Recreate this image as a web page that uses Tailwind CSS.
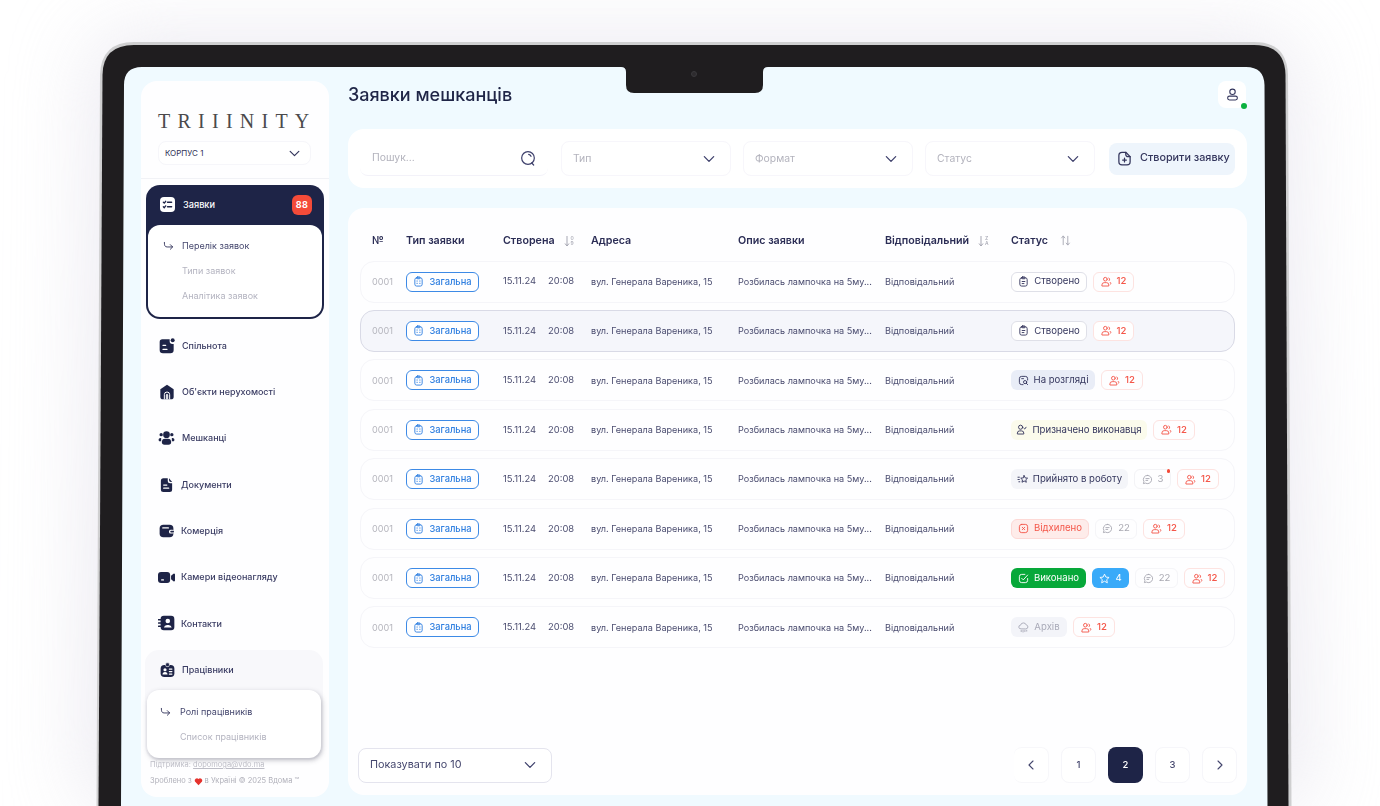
<!DOCTYPE html>
<html lang="uk">
<head>
<meta charset="utf-8">
<title>Заявки мешканців</title>
<script src="https://cdn.jsdelivr.net/npm/@tailwindcss/browser@4"></script>
</head>
<body class="bg-white">
<svg class="hidden" xmlns="http://www.w3.org/2000/svg">
  <symbol id="i-clip" viewBox="0 0 24 24"><g fill="none" stroke="currentColor" stroke-width="2" stroke-linecap="round" stroke-linejoin="round"><rect x="4" y="4" width="16" height="18" rx="4"/><rect x="8.5" y="2" width="7" height="4" rx="1.5"/><path d="M8.5 11h1M14.5 11h1M8.5 16h1M14.5 16h1"/></g></symbol>
  <symbol id="i-created" viewBox="0 0 24 24"><g fill="none" stroke="currentColor" stroke-width="2" stroke-linecap="round" stroke-linejoin="round"><rect x="4" y="4" width="16" height="18" rx="4"/><rect x="8.5" y="2" width="7" height="4" rx="1.5"/><path d="M9 12h6M9 16.500h4"/></g></symbol>
  <symbol id="i-users" viewBox="0 0 24 24"><g fill="none" stroke="currentColor" stroke-width="2" stroke-linecap="round" stroke-linejoin="round"><circle cx="9.500" cy="7" r="4"/><path d="M2 21v-1.500a5 5 0 0 1 5-5h5a5 5 0 0 1 5 5V21zM17 4a4 4 0 0 1 1 6M20 14l2 2-2 2"/></g></symbol>
  <symbol id="i-review" viewBox="0 0 24 24"><g fill="none" stroke="currentColor" stroke-width="2" stroke-linecap="round" stroke-linejoin="round"><path d="M11 21H8a5 5 0 0 1-5-5V8a5 5 0 0 1 5-5h8a5 5 0 0 1 5 5v3"/><circle cx="15.500" cy="15.500" r="3.500"/><path d="M18 18l3 3M8 8h4"/></g></symbol>
  <symbol id="i-assign" viewBox="0 0 24 24"><g fill="none" stroke="currentColor" stroke-width="2" stroke-linecap="round" stroke-linejoin="round"><circle cx="10" cy="7" r="4.500"/><path d="M3 21v-1a5 5 0 0 1 5-5h4a5 5 0 0 1 5 5v1zM17 9l2 2 3-4"/></g></symbol>
  <symbol id="i-accept" viewBox="0 0 24 24"><g fill="none" stroke="currentColor" stroke-width="2" stroke-linecap="round" stroke-linejoin="round"><path d="M14.500 3.500l2.300 5 5.200.6-3.900 3.600 1.100 5.300-4.700-2.700-4.700 2.700 1.100-5.300L7 9.100l5.200-.6z"/><path d="M1 7h3M1 12h3M3 17h2"/></g></symbol>
  <symbol id="i-reject" viewBox="0 0 24 24"><g fill="none" stroke="currentColor" stroke-width="2" stroke-linecap="round"><rect x="3" y="3" width="18" height="18" rx="5"/><path d="M9.500 9.500l5 5M14.500 9.500l-5 5"/></g></symbol>
  <symbol id="i-done" viewBox="0 0 24 24"><g fill="none" stroke="currentColor" stroke-width="2" stroke-linecap="round" stroke-linejoin="round"><path d="M21 12v4a5 5 0 0 1-5 5H8a5 5 0 0 1-5-5V8a5 5 0 0 1 5-5h7"/><path d="M8 11.500l3.500 3.500L21 4.500"/></g></symbol>
  <symbol id="i-star" viewBox="0 0 24 24"><path d="M12 2.500l3 6.400 7 .8-5.200 4.800 1.400 6.900-6.200-3.500-6.200 3.500 1.400-6.900L2 9.700l7-.8z" fill="none" stroke="currentColor" stroke-width="2" stroke-linejoin="round"/></symbol>
  <symbol id="i-chat" viewBox="0 0 24 24"><g fill="none" stroke="currentColor" stroke-width="2" stroke-linecap="round" stroke-linejoin="round"><path d="M12 3a9 9 0 1 1-4.500 16.800L3 21l1.200-4.500A9 9 0 0 1 12 3z"/><path d="M8.500 10h7M8.500 14h4"/></g></symbol>
  <symbol id="i-archive" viewBox="0 0 24 24"><g fill="none" stroke="currentColor" stroke-width="2" stroke-linecap="round" stroke-linejoin="round"><path d="M6 15a4 4 0 0 1-.5-8A6.500 6.500 0 0 1 18 6.500 4.300 4.300 0 0 1 18 15z"/><path d="M7 18v3M11 18v4M15 18v3M19 18v2"/></g></symbol>
  <symbol id="i-down" viewBox="0 0 24 24"><path d="M4 8l8 8 8-8" fill="none" stroke="currentColor" stroke-width="2.200" stroke-linecap="round" stroke-linejoin="round"/></symbol>
  <symbol id="i-branch" viewBox="0 0 24 24"><path d="M3 3c0 7 1 10 6 10h12M16 8l5 5-5 5" fill="none" stroke="currentColor" stroke-width="2" stroke-linecap="round" stroke-linejoin="round"/></symbol>
  <symbol id="n-community" viewBox="0 0 24 24"><path d="M5 2h11v3a4 4 0 0 0 4 4h2v9a5 5 0 0 1-5 5H6a5 5 0 0 1-5-5V6a4 4 0 0 1 4-4z" fill="currentColor"/><circle cx="20.500" cy="3.500" r="3" fill="currentColor"/><path d="M6 11h4M6 17h6" stroke="#fff" stroke-width="2" stroke-linecap="round"/></symbol>
  <symbol id="n-home" viewBox="0 0 24 24"><path d="M12 1l10 7v11a4 4 0 0 1-4 4H6a4 4 0 0 1-4-4V8z" fill="currentColor"/><path d="M8 23v-7a4 4 0 0 1 8 0v7M11 23v-6.500a1 1 0 0 1 2 0V23" fill="none" stroke="#fff" stroke-width="1.500"/></symbol>
  <symbol id="n-people" viewBox="0 0 24 24"><g fill="currentColor"><circle cx="12" cy="7" r="5"/><path d="M5 18a5 5 0 0 1 5-5h4a5 5 0 0 1 5 5 4 4 0 0 1-4 4H9a4 4 0 0 1-4-4z"/><circle cx="4" cy="7" r="2.500"/><circle cx="20" cy="7" r="2.500"/><path d="M0 15a3 3 0 0 1 3-3h1v5H1zM24 15a3 3 0 0 0-3-3h-1v5h3z"/></g></symbol>
  <symbol id="n-doc" viewBox="0 0 24 24"><path d="M7 1h7v4a4 4 0 0 0 4 4h3v10a4 4 0 0 1-4 4H7a4 4 0 0 1-4-4V5a4 4 0 0 1 4-4z" fill="currentColor"/><path d="M16 1l5 6h-2a3 3 0 0 1-3-3z" fill="currentColor"/><path d="M7.500 12h5M7.500 17h8" stroke="#fff" stroke-width="2" stroke-linecap="round"/></symbol>
  <symbol id="n-wallet" viewBox="0 0 24 24"><rect x="1" y="2" width="22" height="20" rx="6" fill="currentColor"/><path d="M6 7h9" stroke="#fff" stroke-width="2" stroke-linecap="round"/><rect x="16" y="10" width="8" height="6" rx="2.500" fill="#fff"/><rect x="18" y="11.700" width="6" height="2.600" rx="1.300" fill="currentColor"/></symbol>
  <symbol id="n-cam" viewBox="0 0 28 24"><rect x="0" y="3" width="20" height="18" rx="5" fill="currentColor"/><path d="M21.500 9l4-3a1.500 1.500 0 0 1 2.500 1.200v9.600a1.500 1.500 0 0 1-2.500 1.200l-4-3z" fill="currentColor"/><path d="M6 16h3" stroke="#fff" stroke-width="2" stroke-linecap="round"/></symbol>
  <symbol id="n-contact" viewBox="0 0 26 24"><rect x="4" y="1" width="21" height="22" rx="5" fill="currentColor"/><path d="M1 7h6M1 12h6M1 17h6" stroke="currentColor" stroke-width="2.600" stroke-linecap="round"/><circle cx="15" cy="9" r="3.500" fill="#fff"/><path d="M9 19a5 5 0 0 1 5-4h2a5 5 0 0 1 5 4z" fill="#fff"/></symbol>
  <symbol id="n-staff" viewBox="0 0 24 24"><rect x="1" y="4" width="22" height="19" rx="6" fill="currentColor"/><rect x="9" y="0.500" width="6" height="6" rx="2" fill="currentColor" stroke="#fff" stroke-width="1"/><circle cx="8" cy="11.500" r="2.500" fill="#fff"/><path d="M4 19a4 4 0 0 1 8 0z" fill="#fff"/><path d="M15 10.500h4M15 14.500h4M15 18.500h4" stroke="#fff" stroke-width="2" stroke-linecap="round"/></symbol>
</svg>

<div class="relative w-[1380px] h-[806px] overflow-hidden bg-white font-['Inter','Noto_Sans',sans-serif]">
  <svg class="absolute inset-0" width="1380" height="806" viewBox="0 0 1380 806" xmlns="http://www.w3.org/2000/svg">
    <path class="blur-2xl" d="M85 806L92 60 Q92 36 130 36L1258 36Q1296 36 1296 60L1305 806Z" fill="#dcd9e6" opacity="0.55"/>
    <path d="M96.500 806L100 75Q101 42 134 42L1254 42Q1287 42 1288 75L1291.500 806Z" fill="#cfcfd0"/>
    <path d="M98.500 806L102.500 75Q103 45 134 45L1254 45Q1285 45 1285.500 75L1288.500 806Z" fill="#1f1d1f"/>
    <path d="M121 806L124 85Q124 67 142 67L1246 67Q1264 67 1264.500 85L1267.500 806Z" fill="#f0faff"/>
    <path d="M621 67Q626 67 626 72L626 85Q626 93 634 93L755 93Q763 93 763 85L763 72Q763 67 768 67Z" fill="#1f1d1f"/>
    <circle cx="694" cy="74" r="2.500" fill="#2d2b2e" stroke="#3a393c"/>
  </svg>

  <div class="absolute left-[141px] top-[81px] w-[1106px] h-[716px] flex gap-[19px] blur-[0.4px] text-[#33355c]">
    <!-- Sidebar -->
    <aside class="relative w-[188px] h-[716px] shrink-0 rounded-2xl bg-[#fefeff] flex flex-col">
      <div class="h-[98px] shrink-0 border-b border-[#f1f2f6] px-[17px] pt-[30px]">
        <div class="h-5 font-['Liberation_Serif',serif] text-[20px] leading-5 tracking-[7.250px] text-[#4b4a4c] whitespace-nowrap">TRIIINITY</div>
        <div class="mt-[10px] h-6 w-[153px] rounded-lg border border-[#f6f6fa] bg-white pl-[6px] pr-[9px] flex items-center justify-between">
          <span class="text-[8px] text-[#2f3156]">КОРПУС 1</span>
          <svg class="w-[13px] h-[13px] text-[#33355c]"><use href="#i-down"/></svg>
        </div>
      </div>

      <div class="mx-[5px] mt-[6px] h-[134px] shrink-0 rounded-[14px] bg-[#1e2447] p-[2px] flex flex-col">
        <div class="h-[38px] shrink-0 pl-[12px] pr-[10px] pb-[3px] flex items-center justify-between">
          <div class="flex items-center gap-[8px]">
            <span class="w-[15px] h-[15px] rounded-[4px] bg-white flex items-center justify-center">
              <svg class="w-[11px] h-[11px] text-[#1e2447]" viewBox="0 0 24 24"><path d="M3 7l2 2 3-4M3 17l2 2 3-4M12 7h9M12 17h9" fill="none" stroke="currentColor" stroke-width="3" stroke-linecap="round" stroke-linejoin="round"/></svg>
            </span>
            <span class="text-[9.200px] font-medium text-white">Заявки</span>
          </div>
          <span class="w-5 h-5 rounded-[6px] bg-[#f44b39] text-white text-[9px] font-bold tracking-[0.5px] flex items-center justify-center">88</span>
        </div>
        <div class="flex-1 rounded-xl bg-white pl-[15px] pt-[11px] text-[9px]">
          <div class="h-[20px] flex items-center"><svg class="w-[11px] h-[11px] mr-[8px] text-[#33355c]"><use href="#i-branch"/></svg><span class="text-[#45476e]">Перелік заявок</span></div>
          <div class="mt-[5px] h-[20px] pl-[19px] flex items-center text-[#b4b4c0]">Типи заявок</div>
          <div class="mt-[5px] h-[20px] pl-[19px] flex items-center text-[#b4b4c0]">Аналітика заявок</div>
        </div>
      </div>

      <nav class="mt-[3.500px] text-[9px] font-medium text-[#3a3c63]">
        <div class="h-[46.300px] pl-[18px] flex items-center gap-[7px]"><svg class="w-[16px] h-[16px] text-[#1e2447]"><use href="#n-community"/></svg>Спільнота</div>
        <div class="h-[46.300px] pl-[18px] flex items-center gap-[7px]"><svg class="w-[16px] h-[16px] text-[#1e2447]"><use href="#n-home"/></svg>Об'єкти нерухомості</div>
        <div class="h-[46.300px] pl-[17px] flex items-center gap-[7px]"><svg class="w-[17px] h-[16px] text-[#1e2447]"><use href="#n-people"/></svg>Мешканці</div>
        <div class="h-[46.300px] pl-[18px] flex items-center gap-[7px]"><svg class="w-[15px] h-[16px] text-[#1e2447]"><use href="#n-doc"/></svg>Документи</div>
        <div class="h-[46.300px] pl-[18px] flex items-center gap-[7px]"><svg class="w-[15px] h-[16px] text-[#1e2447]"><use href="#n-wallet"/></svg>Комерція</div>
        <div class="h-[46.300px] pl-[17px] flex items-center gap-[6px]"><svg class="w-[17px] h-[15px] text-[#1e2447]"><use href="#n-cam"/></svg>Камери відеонагляду</div>
        <div class="h-[46.300px] pl-[17px] flex items-center gap-[6px]"><svg class="w-[17px] h-[16px] text-[#1e2447]"><use href="#n-contact"/></svg>Контакти</div>
      </nav>

      <div class="ml-[4px] mr-[6px] mt-[3.500px] h-[110px] shrink-0 rounded-[14px] bg-[#f8f8fb] px-[2px] flex flex-col">
        <div class="h-[40px] shrink-0 pl-[13px] flex items-center gap-[7px] text-[9px] font-medium text-[#3a3c63]"><svg class="w-[15px] h-[16px] text-[#1e2447]"><use href="#n-staff"/></svg>Працівники</div>
        <div class="h-[68px] rounded-xl bg-white pl-[13px] pt-[12px] text-[9px] shadow-[1px_2px_5px_rgba(60,60,80,0.35)]">
          <div class="h-[20px] flex items-center"><svg class="w-[11px] h-[11px] mr-[9px] text-[#33355c]"><use href="#i-branch"/></svg><span class="text-[#45476e]">Ролі працівників</span></div>
          <div class="mt-[5px] h-[20px] pl-[20px] flex items-center text-[#b4b4c0]">Список працівників</div>
        </div>
      </div>

      <div class="-mt-[1px] pl-[9px] text-[7.500px] text-[#bdbdc6]">
        <div class="h-3 leading-3 whitespace-nowrap">Підтримка: <span class="underline">dopomoga@vdo.ma</span></div>
        <div class="mt-[4px] h-3 leading-3 flex items-center whitespace-nowrap text-[#b0b0ba]">Зроблено з<svg class="mx-[2px] w-[9px] h-[9px]" viewBox="0 0 24 24"><path d="M12 22L2.500 12A6 6 0 0 1 12 5a6 6 0 0 1 9.500 7z" fill="#e5322d"/></svg>в Україні © 2025 Вдома ™</div>
      </div>
    </aside>

    <!-- Main -->
    <main class="w-[899px] shrink-0 flex flex-col">
      <header class="h-[27px] shrink-0 flex items-center justify-between">
        <h1 class="text-[18px] leading-[27px] font-medium text-[#1f2547]">Заявки мешканців</h1>
        <div class="relative mr-px w-[28px] h-[27px] rounded-lg bg-white flex items-center justify-center">
          <svg class="w-[13px] h-[13px] text-[#33355c]" viewBox="0 0 24 24"><g fill="none" stroke="currentColor" stroke-width="2"><circle cx="12" cy="7" r="5"/><rect x="3" y="15" width="18" height="7" rx="3.500"/></g></svg>
          <span class="absolute -right-[1px] -bottom-[1px] w-[6px] h-[6px] rounded-full bg-[#0cb13f]"></span>
        </div>
      </header>

      <div class="mt-[21px] h-[59px] shrink-0 rounded-2xl bg-white px-[12px] flex items-center text-[10.400px] text-[#b3b3bd]">
        <div class="w-[188px] h-[35px] shrink-0 rounded-lg border-b border-[#f3f2f9] pl-[12px] pr-[12px] flex items-center justify-between">Пошук...
          <svg class="w-4 h-4 text-[#3d3f6b]" viewBox="0 0 24 24"><g fill="none" stroke="currentColor" stroke-width="1.800" stroke-linecap="round"><circle cx="12" cy="12" r="9.500"/><path d="M17.500 19.500l3 3M13 6.500a5 5 0 0 1 3.500 3"/></g></svg>
        </div>
        <div class="ml-[13px] w-[170px] h-[35px] shrink-0 rounded-lg border border-[#f7f6fb] pl-[11px] pr-[14px] flex items-center justify-between">Тип<svg class="w-[14px] h-[14px] text-[#3d3f6b]"><use href="#i-down"/></svg></div>
        <div class="ml-[12px] w-[170px] h-[35px] shrink-0 rounded-lg border border-[#f7f6fb] pl-[11px] pr-[14px] flex items-center justify-between">Формат<svg class="w-[14px] h-[14px] text-[#3d3f6b]"><use href="#i-down"/></svg></div>
        <div class="ml-[12px] w-[170px] h-[35px] shrink-0 rounded-lg border border-[#f7f6fb] pl-[11px] pr-[14px] flex items-center justify-between">Статус<svg class="w-[14px] h-[14px] text-[#3d3f6b]"><use href="#i-down"/></svg></div>
        <div class="ml-[14px] w-[126px] h-[32px] shrink-0 rounded-lg bg-[#eef5fc] pl-[8px] flex items-center gap-[8px] text-[10.800px] text-[#33355c] font-medium whitespace-nowrap">
          <svg class="w-[15px] h-[15px] text-[#33355c]" viewBox="0 0 24 24"><g fill="none" stroke="currentColor" stroke-width="2" stroke-linecap="round" stroke-linejoin="round"><path d="M8 2h6l7 7v8a5 5 0 0 1-5 5H8a5 5 0 0 1-5-5V7a5 5 0 0 1 5-5z"/><path d="M14 2v3a4 4 0 0 0 4 4h3M12 11.500v6M9 14.500h6"/></g></svg>Створити заявку
        </div>
      </div>

      <section class="mt-[20px] h-[587px] shrink-0 rounded-2xl bg-[#fefeff] px-[12px] flex flex-col">
        <div class="h-[52.500px] shrink-0 pt-[13px] pl-[12px] grid grid-cols-[34px_97px_88px_147px_147px_126px_1fr] items-center text-[10.700px] font-semibold text-[#2b2d55]">
          <span>№</span>
          <span>Тип заявки</span>
          <span class="flex items-center gap-[9px]">Створена<span class="flex items-center gap-[1px] text-[#a6a7b3]"><svg class="w-[6px] h-[12px]" viewBox="0 0 6 12"><path d="M3 1v10M1 8.500L3 11l2-2.500" fill="none" stroke="currentColor" stroke-width="1"/></svg><span class="w-[5px] text-[5px] leading-[5px] font-medium">0<br>9</span></span></span>
          <span>Адреса</span>
          <span>Опис заявки</span>
          <span class="flex items-center gap-[9px]">Відповідальний<span class="flex items-center gap-[1px] text-[#a6a7b3]"><svg class="w-[6px] h-[12px]" viewBox="0 0 6 12"><path d="M3 1v10M1 8.500L3 11l2-2.500" fill="none" stroke="currentColor" stroke-width="1"/></svg><span class="w-[5px] text-[5px] leading-[5px] font-medium">Z<br>A</span></span></span>
          <span class="flex items-center gap-[12px]">Статус<svg class="w-[11px] h-[11px] text-[#a6a7b3]" viewBox="0 0 12 12"><path d="M3.500 11V1M1.500 3.500L3.500 1l2 2.500M8.500 1v10M6.500 8.500l2 2.500 2-2.500" fill="none" stroke="currentColor" stroke-width="1"/></svg></span>
        </div>

        <div class="flex flex-col gap-[7.430px] text-[9.100px] text-[#4b4d70]">
          <!-- row 1 -->
          <div class="h-[42px] rounded-[14px] border border-[#f5f5f9] pl-[11px] grid grid-cols-[34px_97px_88px_147px_147px_126px_1fr] items-center">
            <span class="text-[#b5b5bd]">0001</span>
            <span class="w-[73px] h-5 rounded-[6px] border border-[#3d8ae6] text-[#2f7fe0] text-[9.300px] font-medium flex items-center justify-center gap-[5px]"><svg class="w-[11px] h-[11px]"><use href="#i-clip"/></svg>Загальна</span>
            <span class="flex gap-[12px] text-[9.400px]"><span>15.11.24</span><span>20:08</span></span>
            <span class="whitespace-nowrap">вул. Генерала Вареника, 15</span>
            <span class="whitespace-nowrap">Розбилась лампочка на 5му...</span>
            <span>Відповідальний</span>
            <span class="flex gap-[6px] text-[9.600px]">
              <span class="w-[76px] h-5 rounded-[6px] border border-[#dfe0e8] bg-white text-[#33355c] flex items-center justify-center gap-[5px]"><svg class="w-[11px] h-[11px]"><use href="#i-created"/></svg>Створено</span>
              <span class="w-[41px] h-5 rounded-[6px] border border-[#fde3e1] text-[#f4574a] font-medium flex items-center justify-center gap-[5px]"><svg class="w-[11px] h-[11px]"><use href="#i-users"/></svg>12</span>
            </span>
          </div>
          <!-- row 2 -->
          <div class="h-[42px] rounded-[14px] border border-[#d9dae6] bg-[#f5f6fb] pl-[11px] grid grid-cols-[34px_97px_88px_147px_147px_126px_1fr] items-center">
            <span class="text-[#b5b5bd]">0001</span>
            <span class="w-[73px] h-5 rounded-[6px] border border-[#3d8ae6] bg-white text-[#2f7fe0] text-[9.300px] font-medium flex items-center justify-center gap-[5px]"><svg class="w-[11px] h-[11px]"><use href="#i-clip"/></svg>Загальна</span>
            <span class="flex gap-[12px] text-[9.400px]"><span>15.11.24</span><span>20:08</span></span>
            <span class="whitespace-nowrap">вул. Генерала Вареника, 15</span>
            <span class="whitespace-nowrap">Розбилась лампочка на 5му...</span>
            <span>Відповідальний</span>
            <span class="flex gap-[6px] text-[9.600px]">
              <span class="w-[76px] h-5 rounded-[6px] border border-[#dfe0e8] bg-white text-[#33355c] flex items-center justify-center gap-[5px]"><svg class="w-[11px] h-[11px]"><use href="#i-created"/></svg>Створено</span>
              <span class="w-[41px] h-5 rounded-[6px] border border-[#fde3e1] bg-white text-[#f4574a] font-medium flex items-center justify-center gap-[5px]"><svg class="w-[11px] h-[11px]"><use href="#i-users"/></svg>12</span>
            </span>
          </div>
          <!-- row 3 -->
          <div class="h-[42px] rounded-[14px] border border-[#f5f5f9] pl-[11px] grid grid-cols-[34px_97px_88px_147px_147px_126px_1fr] items-center">
            <span class="text-[#b5b5bd]">0001</span>
            <span class="w-[73px] h-5 rounded-[6px] border border-[#3d8ae6] text-[#2f7fe0] text-[9.300px] font-medium flex items-center justify-center gap-[5px]"><svg class="w-[11px] h-[11px]"><use href="#i-clip"/></svg>Загальна</span>
            <span class="flex gap-[12px] text-[9.400px]"><span>15.11.24</span><span>20:08</span></span>
            <span class="whitespace-nowrap">вул. Генерала Вареника, 15</span>
            <span class="whitespace-nowrap">Розбилась лампочка на 5му...</span>
            <span>Відповідальний</span>
            <span class="flex gap-[6px] text-[9.600px]">
              <span class="w-[84px] h-5 rounded-[6px] bg-[#e9edf7] text-[#33355c] flex items-center justify-center gap-[5px]"><svg class="w-[11px] h-[11px]"><use href="#i-review"/></svg>На розгляді</span>
              <span class="w-[42px] h-5 rounded-[6px] border border-[#fde3e1] text-[#f4574a] font-medium flex items-center justify-center gap-[5px]"><svg class="w-[11px] h-[11px]"><use href="#i-users"/></svg>12</span>
            </span>
          </div>
          <!-- row 4 -->
          <div class="h-[42px] rounded-[14px] border border-[#f5f5f9] pl-[11px] grid grid-cols-[34px_97px_88px_147px_147px_126px_1fr] items-center">
            <span class="text-[#b5b5bd]">0001</span>
            <span class="w-[73px] h-5 rounded-[6px] border border-[#3d8ae6] text-[#2f7fe0] text-[9.300px] font-medium flex items-center justify-center gap-[5px]"><svg class="w-[11px] h-[11px]"><use href="#i-clip"/></svg>Загальна</span>
            <span class="flex gap-[12px] text-[9.400px]"><span>15.11.24</span><span>20:08</span></span>
            <span class="whitespace-nowrap">вул. Генерала Вареника, 15</span>
            <span class="whitespace-nowrap">Розбилась лампочка на 5му...</span>
            <span>Відповідальний</span>
            <span class="flex gap-[6px] text-[9.600px]">
              <span class="w-[136px] h-5 rounded-[6px] bg-[#fbfbec] text-[#33355c] flex items-center justify-center gap-[5px] whitespace-nowrap"><svg class="w-[11px] h-[11px]"><use href="#i-assign"/></svg>Призначено виконавця</span>
              <span class="w-[42px] h-5 rounded-[6px] border border-[#fde3e1] text-[#f4574a] font-medium flex items-center justify-center gap-[5px]"><svg class="w-[11px] h-[11px]"><use href="#i-users"/></svg>12</span>
            </span>
          </div>
          <!-- row 5 -->
          <div class="h-[42px] rounded-[14px] border border-[#f5f5f9] pl-[11px] grid grid-cols-[34px_97px_88px_147px_147px_126px_1fr] items-center">
            <span class="text-[#b5b5bd]">0001</span>
            <span class="w-[73px] h-5 rounded-[6px] border border-[#3d8ae6] text-[#2f7fe0] text-[9.300px] font-medium flex items-center justify-center gap-[5px]"><svg class="w-[11px] h-[11px]"><use href="#i-clip"/></svg>Загальна</span>
            <span class="flex gap-[12px] text-[9.400px]"><span>15.11.24</span><span>20:08</span></span>
            <span class="whitespace-nowrap">вул. Генерала Вареника, 15</span>
            <span class="whitespace-nowrap">Розбилась лампочка на 5му...</span>
            <span>Відповідальний</span>
            <span class="flex gap-[6px] text-[9.600px]">
              <span class="w-[117px] h-5 rounded-[6px] bg-[#f4f5f9] text-[#33355c] flex items-center justify-center gap-[4px] whitespace-nowrap"><svg class="w-[12px] h-[11px]"><use href="#i-accept"/></svg>Прийнято в роботу</span>
              <span class="relative w-[37px] h-5 rounded-[6px] border border-[#f3f3f6] text-[#a9a9b2] flex items-center justify-center gap-[5px]"><svg class="w-[11px] h-[11px]"><use href="#i-chat"/></svg>3<span class="absolute right-[0px] -top-[1px] w-[3.500px] h-[3.500px] rounded-full bg-[#f44b39]"></span></span>
              <span class="w-[42px] h-5 rounded-[6px] border border-[#fde3e1] text-[#f4574a] font-medium flex items-center justify-center gap-[5px]"><svg class="w-[11px] h-[11px]"><use href="#i-users"/></svg>12</span>
            </span>
          </div>
          <!-- row 6 -->
          <div class="h-[42px] rounded-[14px] border border-[#f5f5f9] pl-[11px] grid grid-cols-[34px_97px_88px_147px_147px_126px_1fr] items-center">
            <span class="text-[#b5b5bd]">0001</span>
            <span class="w-[73px] h-5 rounded-[6px] border border-[#3d8ae6] text-[#2f7fe0] text-[9.300px] font-medium flex items-center justify-center gap-[5px]"><svg class="w-[11px] h-[11px]"><use href="#i-clip"/></svg>Загальна</span>
            <span class="flex gap-[12px] text-[9.400px]"><span>15.11.24</span><span>20:08</span></span>
            <span class="whitespace-nowrap">вул. Генерала Вареника, 15</span>
            <span class="whitespace-nowrap">Розбилась лампочка на 5му...</span>
            <span>Відповідальний</span>
            <span class="flex gap-[6px] text-[9.600px]">
              <span class="w-[78px] h-5 rounded-[6px] border border-[#fdd9d6] bg-[#feecea] text-[#f4574a] flex items-center justify-center gap-[5px]"><svg class="w-[11px] h-[11px]"><use href="#i-reject"/></svg>Відхилено</span>
              <span class="w-[42px] h-5 rounded-[6px] border border-[#f5f5f8] text-[#a9a9b2] flex items-center justify-center gap-[5px]"><svg class="w-[11px] h-[11px]"><use href="#i-chat"/></svg>22</span>
              <span class="w-[42px] h-5 rounded-[6px] border border-[#fde3e1] text-[#f4574a] font-medium flex items-center justify-center gap-[5px]"><svg class="w-[11px] h-[11px]"><use href="#i-users"/></svg>12</span>
            </span>
          </div>
          <!-- row 7 -->
          <div class="h-[42px] rounded-[14px] border border-[#f5f5f9] pl-[11px] grid grid-cols-[34px_97px_88px_147px_147px_126px_1fr] items-center">
            <span class="text-[#b5b5bd]">0001</span>
            <span class="w-[73px] h-5 rounded-[6px] border border-[#3d8ae6] text-[#2f7fe0] text-[9.300px] font-medium flex items-center justify-center gap-[5px]"><svg class="w-[11px] h-[11px]"><use href="#i-clip"/></svg>Загальна</span>
            <span class="flex gap-[12px] text-[9.400px]"><span>15.11.24</span><span>20:08</span></span>
            <span class="whitespace-nowrap">вул. Генерала Вареника, 15</span>
            <span class="whitespace-nowrap">Розбилась лампочка на 5му...</span>
            <span>Відповідальний</span>
            <span class="flex gap-[6px] text-[9.600px]">
              <span class="w-[75px] h-5 rounded-[6px] bg-[#07a83a] text-white flex items-center justify-center gap-[5px]"><svg class="w-[11px] h-[11px]"><use href="#i-done"/></svg>Виконано</span>
              <span class="w-[37px] h-5 rounded-[6px] bg-[#39aaf9] text-white flex items-center justify-center gap-[5px]"><svg class="w-[11px] h-[11px]"><use href="#i-star"/></svg>4</span>
              <span class="w-[43px] h-5 rounded-[6px] border border-[#f5f5f8] text-[#a9a9b2] flex items-center justify-center gap-[5px]"><svg class="w-[11px] h-[11px]"><use href="#i-chat"/></svg>22</span>
              <span class="w-[41px] h-5 rounded-[6px] border border-[#fde3e1] text-[#f4574a] font-medium flex items-center justify-center gap-[5px]"><svg class="w-[11px] h-[11px]"><use href="#i-users"/></svg>12</span>
            </span>
          </div>
          <!-- row 8 -->
          <div class="h-[42px] rounded-[14px] border border-[#f5f5f9] pl-[11px] grid grid-cols-[34px_97px_88px_147px_147px_126px_1fr] items-center">
            <span class="text-[#b5b5bd]">0001</span>
            <span class="w-[73px] h-5 rounded-[6px] border border-[#3d8ae6] text-[#2f7fe0] text-[9.300px] font-medium flex items-center justify-center gap-[5px]"><svg class="w-[11px] h-[11px]"><use href="#i-clip"/></svg>Загальна</span>
            <span class="flex gap-[12px] text-[9.400px]"><span>15.11.24</span><span>20:08</span></span>
            <span class="whitespace-nowrap">вул. Генерала Вареника, 15</span>
            <span class="whitespace-nowrap">Розбилась лампочка на 5му...</span>
            <span>Відповідальний</span>
            <span class="flex gap-[6px] text-[9.600px]">
              <span class="w-[56px] h-5 rounded-[6px] bg-[#f3f4f9] text-[#a9aab8] flex items-center justify-center gap-[5px]"><svg class="w-[11px] h-[11px]"><use href="#i-archive"/></svg>Архів</span>
              <span class="w-[42px] h-5 rounded-[6px] border border-[#fde3e1] text-[#f4574a] font-medium flex items-center justify-center gap-[5px]"><svg class="w-[11px] h-[11px]"><use href="#i-users"/></svg>12</span>
            </span>
          </div>
        </div>

        <div class="mt-auto mb-[12px] -ml-[2px] -mr-[2px] flex items-center justify-between">
          <div class="w-[194px] h-[35px] rounded-lg border border-[#e4e4ee] bg-white pl-[11px] pr-[14px] flex items-center justify-between text-[10.800px] text-[#45476e]">Показувати по 10<svg class="w-[14px] h-[14px] text-[#3d3f6b]"><use href="#i-down"/></svg></div>
          <div class="flex items-center gap-[12px] text-[9.500px] font-medium text-[#45476e]">
            <span class="w-[35px] h-[36px] rounded-lg border-y border-r border-[#f7f7fa] bg-white flex items-center justify-center"><svg class="w-3 h-3 rotate-90"><use href="#i-down"/></svg></span>
            <span class="w-[35px] h-[36px] rounded-lg border border-[#f6f6fa] bg-white flex items-center justify-center">1</span>
            <span class="w-[35px] h-[36px] rounded-lg bg-[#1e2447] text-white flex items-center justify-center">2</span>
            <span class="w-[35px] h-[36px] rounded-lg border border-[#f6f6fa] bg-white flex items-center justify-center">3</span>
            <span class="w-[35px] h-[36px] rounded-lg border border-[#f6f6fa] bg-white flex items-center justify-center"><svg class="w-3 h-3 -rotate-90"><use href="#i-down"/></svg></span>
          </div>
        </div>
      </section>
    </main>
  </div>
</div>
</body>
</html>
